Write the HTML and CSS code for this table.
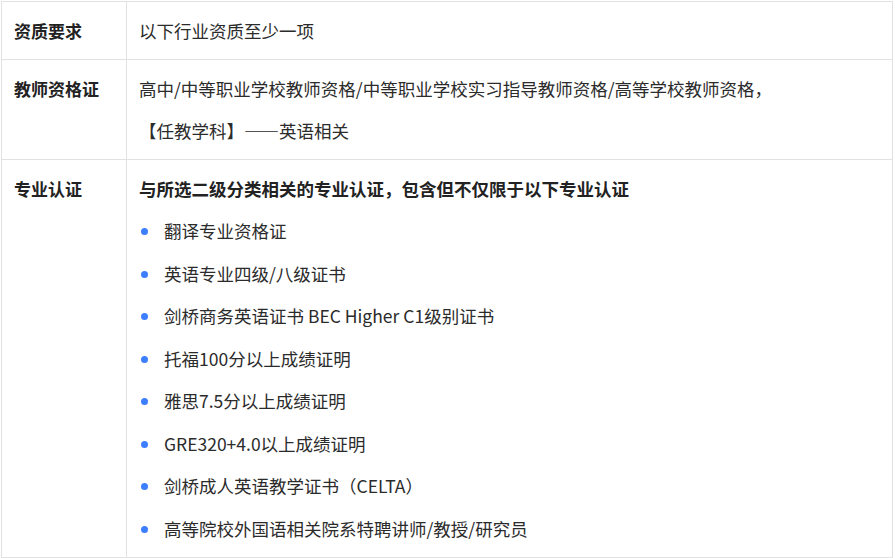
FILE: index.html
```html
<!DOCTYPE html>
<html lang="zh-CN">
<head>
<meta charset="utf-8">
<link rel="stylesheet" href="styles.css">
</head>
<body>
<div class="wrap">
<table class="req">
  <tr>
    <th class="label">资质要求</th>
    <td class="value"><div class="line">以下行业资质至少一项</div></td>
  </tr>
  <tr>
    <th class="label">教师资格证</th>
    <td class="value">
      <div class="line">高中/中等职业学校教师资格/中等职业学校实习指导教师资格/高等学校教师资格，</div>
      <div class="line">【任教学科】——英语相关</div>
    </td>
  </tr>
  <tr>
    <th class="label">专业认证</th>
    <td class="value">
      <div class="line strong">与所选二级分类相关的专业认证，包含但不仅限于以下专业认证</div>
      <ul class="list">
        <li>翻译专业资格证</li>
        <li>英语专业四级/八级证书</li>
        <li>剑桥商务英语证书 BEC Higher C1级别证书</li>
        <li>托福100分以上成绩证明</li>
        <li>雅思7.5分以上成绩证明</li>
        <li>GRE320+4.0以上成绩证明</li>
        <li>剑桥成人英语教学证书（CELTA）</li>
        <li>高等院校外国语相关院系特聘讲师/教授/研究员</li>
      </ul>
    </td>
  </tr>
</table>
</div>
</body>
</html>
```

FILE: styles.css
```css
html, body {
  margin: 0;
  padding: 0;
  background: #fff;
}
body {
  font-family: "Noto Sans CJK SC", "Noto Sans", sans-serif;
  font-size: 17px;
  color: #2b2b2b;
}
.wrap {
  padding: 1px 0 0 1px;
}
.req {
  border-collapse: collapse;
  width: 892px;
}
.req th, .req td {
  border: 1px solid #e2e2e2;
  vertical-align: top;
  text-align: left;
  padding: 16px 12px 15px;
}
.label {
  width: 100px;
  font-weight: 700;
  color: #222;
}
.value {
  font-size: 17.5px;
}
.line, .list li {
  line-height: 26px;
  height: 26px;
  white-space: nowrap;
}
.value .line + .line {
  margin-top: 16px;
}
.strong {
  font-weight: 700;
  color: #222;
}
.list {
  list-style: none;
  margin: 16.3px 0 0;
  padding: 0;
  display: flex;
  flex-direction: column;
  gap: 16.5px;
}
.list li {
  position: relative;
  padding-left: 25px;
}
.list li::before {
  content: "";
  position: absolute;
  left: 2px;
  top: 10px;
  width: 7px;
  height: 7px;
  border-radius: 50%;
  background: #3d7eff;
}
```
